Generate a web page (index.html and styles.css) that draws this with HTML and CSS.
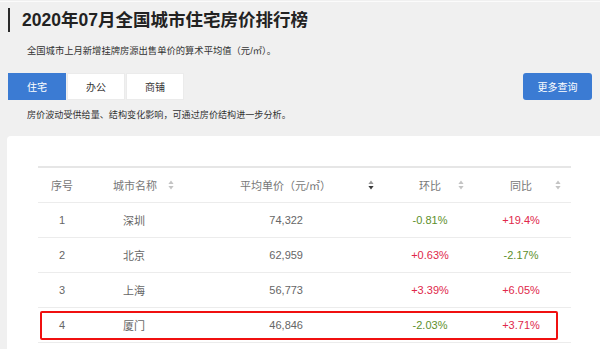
FILE: index.html
```html
<!DOCTYPE html>
<html lang="zh">
<head>
<meta charset="utf-8">
<title>2020年07月全国城市住宅房价排行榜</title>
<link rel="stylesheet" href="styles.css">
</head>
<body>
<div class="page">
  <h1 class="title"><span class="title-text">2020年07月全国城市住宅房价排行榜</span></h1>
  <p class="subtitle">全国城市上月新增挂牌房源出售单价的算术平均值（元/㎡）。</p>
  <div class="toolbar">
    <div class="tabs">
      <span class="tab active">住宅</span>
      <span class="tab">办公</span>
      <span class="tab">商铺</span>
    </div>
    <span class="more">更多查询</span>
  </div>
  <p class="desc">房价波动受供给量、结构变化影响，可通过房价结构进一步分析。</p>
  <div class="panel">
    <div class="table">
      <div class="row head">
        <div class="c c1">序号</div>
        <div class="c c2">城市名称<svg class="sort s2" width="6" height="10" viewBox="0 0 6 10"><path d="M3 0.5L5.6 4H0.4Z" fill="#c4c4c4"/><path d="M3 9.5L5.6 6H0.4Z" fill="#c4c4c4"/></svg></div>
        <div class="c c3">平均单价（元/㎡）<svg class="sort s3" width="6" height="10" viewBox="0 0 6 10"><path d="M3 0.5L5.6 4H0.4Z" fill="#9a9a9a"/><path d="M3 9.5L5.6 6H0.4Z" fill="#3a3a3a"/></svg></div>
        <div class="c c4">环比<svg class="sort s4" width="6" height="10" viewBox="0 0 6 10"><path d="M3 0.5L5.6 4H0.4Z" fill="#c4c4c4"/><path d="M3 9.5L5.6 6H0.4Z" fill="#c4c4c4"/></svg></div>
        <div class="c c5">同比<svg class="sort s5" width="6" height="10" viewBox="0 0 6 10"><path d="M3 0.5L5.6 4H0.4Z" fill="#c4c4c4"/><path d="M3 9.5L5.6 6H0.4Z" fill="#c4c4c4"/></svg></div>
      </div>
      <div class="row">
        <div class="c c1">1</div>
        <div class="c c2">深圳</div>
        <div class="c c3">74,322</div>
        <div class="c c4 down">-0.81%</div>
        <div class="c c5 up">+19.4%</div>
      </div>
      <div class="row">
        <div class="c c1">2</div>
        <div class="c c2">北京</div>
        <div class="c c3">62,959</div>
        <div class="c c4 up">+0.63%</div>
        <div class="c c5 down">-2.17%</div>
      </div>
      <div class="row">
        <div class="c c1">3</div>
        <div class="c c2">上海</div>
        <div class="c c3">56,773</div>
        <div class="c c4 up">+3.39%</div>
        <div class="c c5 up">+6.05%</div>
      </div>
      <div class="row marked">
        <div class="c c1">4</div>
        <div class="c c2">厦门</div>
        <div class="c c3">46,846</div>
        <div class="c c4 down">-2.03%</div>
        <div class="c c5 up">+3.71%</div>
      </div>
    </div>
  </div>
</div>
</body>
</html>
```

FILE: styles.css
```css
html, body {
  margin: 0;
  padding: 0;
  background: #f0f0f0;
  height: 100%;
  overflow: hidden;
}
body {
  font-family: "Liberation Sans", "Noto Sans CJK SC", sans-serif;
  color: #333;
}
.page {
  border-top: 1px solid #fbfbfb;
  margin-top: 1px;
  display: flex;
  flex-direction: column;
  height: 347px;
}
.title {
  margin: 6px 0 0 8px;
  padding-left: 12px;
  border-left: 2px solid #2a2a2a;
  height: 24px;
  line-height: 24px;
  font-size: 17.5px;
  font-weight: bold;
  color: #222;
}
.title-text {
  display: inline-block;
}
.subtitle {
  margin: 12px 0 0 27px;
  font-size: 9.3px;
  line-height: 14px;
  color: #333;
}
.toolbar {
  margin: 15px 8px 0 8px;
  display: flex;
  justify-content: space-between;
  align-items: center;
}
.tabs {
  display: flex;
  gap: 1px;
}
.tab {
  width: 58px;
  height: 27px;
  box-sizing: border-box;
  display: flex;
  align-items: center;
  justify-content: center;
  background: #fff;
  border: 1px solid #ebebeb;
  font-size: 10px;
  color: #333;
}
.tab.active {
  background: #3b7bd3;
  border-color: #3b7bd3;
  color: #fff;
}
.more {
  width: 69px;
  height: 27px;
  border-radius: 3px;
  background: #3b7bd3;
  color: #fff;
  font-size: 10px;
  display: flex;
  align-items: center;
  justify-content: center;
}
.desc {
  margin: 8px 0 0 27px;
  font-size: 9.1px;
  line-height: 14px;
  color: #333;
}
.panel {
  margin: 14px 0 0 7px;
  flex: 1;
  background: #fff;
  border-radius: 4px 0 0 0;
  padding: 30px 0 0 31px;
}
.table {
  width: 533px;
  border-top: 2px solid #e6e6e6;
  font-size: 11px;
  color: #666;
}
.row {
  display: grid;
  grid-template-columns: 48px 114px 180px 100px 91px;
  height: 34px;
  border-bottom: 1px solid #ececec;
  position: relative;
}
.c {
  display: flex;
  align-items: center;
}
.c1 { justify-content: center; }
.c2 { padding-left: 37px; }
.c3 { justify-content: flex-end; padding-right: 77px; }
.c4 { justify-content: center; }
.c5 { justify-content: center; padding-right: 9px; }
.head .c { color: #777; }
.head .c2 { padding-left: 27px; }
.head .c3 { justify-content: flex-start; padding-left: 40px; padding-right: 0; }
.head .c4 { justify-content: flex-start; padding-left: 39px; }
.head .c5 { justify-content: flex-start; padding-left: 30px; padding-right: 0; }
.sort { flex: none; }
.s2 { margin-left: 11px; }
.s3 { margin-left: 37px; }
.s4 { margin-left: 17px; }
.s5 { margin-left: 23px; }
.up { color: #e0284a; }
.down { color: #5e8f2c; }
.marked::after {
  content: "";
  position: absolute;
  left: 2px;
  right: 13px;
  top: 3px;
  bottom: 2px;
  border: 2px solid #f01010;
  border-radius: 2px;
  pointer-events: none;
}
```
